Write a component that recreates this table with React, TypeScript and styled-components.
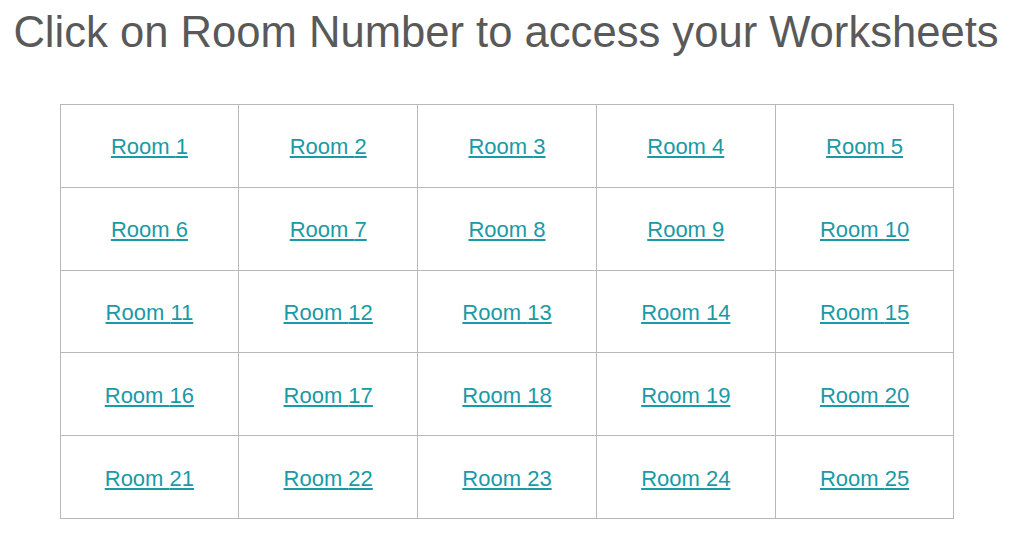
import React from "react";
import styled, { createGlobalStyle } from "styled-components";

const GlobalStyle = createGlobalStyle`
  body {
    margin: 0;
    background: #ffffff;
    font-family: "Liberation Sans", Arial, sans-serif;
  }
`;

const rooms = Array.from({ length: 25 }, (_, i) => i + 1);

const App = () => {
  return (
    <Page>
      <GlobalStyle />
      <Title>Click on Room Number to access your Worksheets</Title>
      <Grid>
        {rooms.map((n) => (
          <Cell key={n}>
            <RoomLink href="#">Room {n}</RoomLink>
          </Cell>
        ))}
      </Grid>
    </Page>
  );
};

export default App;

const Page = styled.div`
  width: 1022px;
  display: flex;
  flex-direction: column;
  align-items: center;
`;

const Title = styled.h1`
  margin: 6px 10px 0 0;
  font-size: 43.6px;
  font-weight: 400;
  color: #595959;
  line-height: 52px;
`;

const Grid = styled.div`
  margin-top: 46px;
  margin-left: -8px;
  display: grid;
  grid-template-columns: repeat(5, 178.8px);
  grid-auto-rows: 82.8px;
  border-top: 1px solid #b8b8b8;
  border-left: 1px solid #b8b8b8;
`;

const Cell = styled.div`
  display: flex;
  align-items: center;
  justify-content: center;
  padding-top: 3px;
  border-right: 1px solid #b8b8b8;
  border-bottom: 1px solid #b8b8b8;
`;

const RoomLink = styled.a`
  font-size: 22px;
  color: #1a9aa6;
  text-decoration: underline;
`;
